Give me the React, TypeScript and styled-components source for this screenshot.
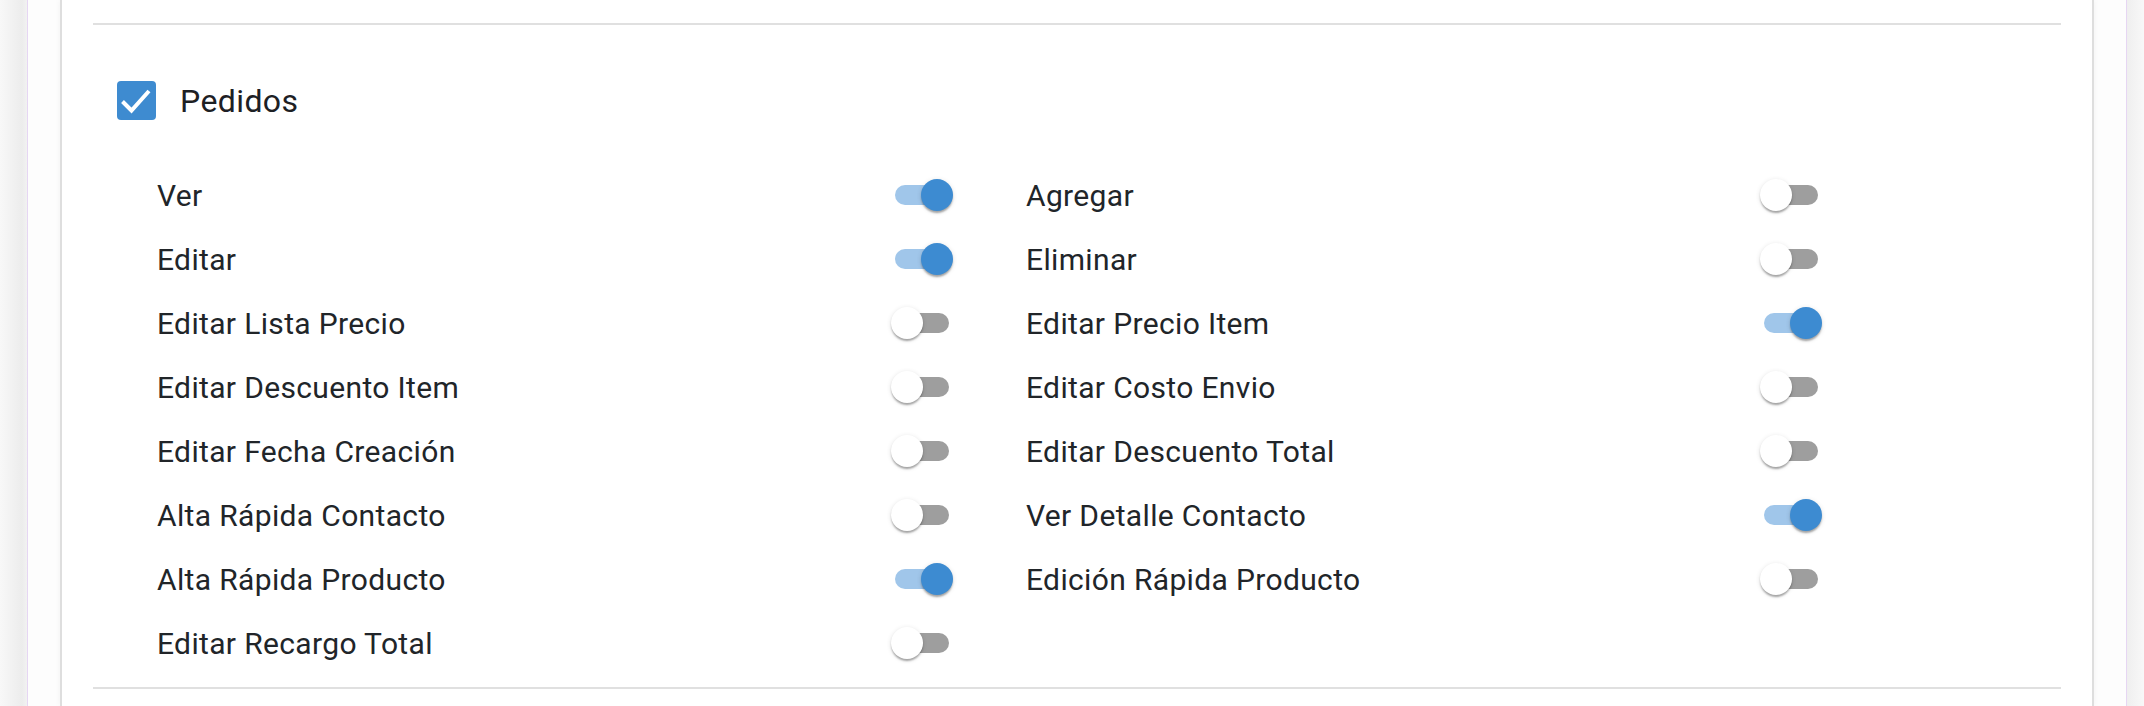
import { useState } from 'react'
import styled, { createGlobalStyle } from 'styled-components'

const GlobalStyle = createGlobalStyle`
  * {
    box-sizing: border-box;
  }
  body {
    margin: 0;
    font-family: Roboto, 'Liberation Sans', Arial, sans-serif;
    color: #212529;
    background: #f4f4f4;
  }
`

const Page = styled.div`
  height: 706px;
  overflow: hidden;
  padding: 0 17px 0 27px;
  background: linear-gradient(to right, #f8f8f8 0px, #ececec 22px, #f2f2f2 27px, #f2f2f2 2116px, #ececec 2122px, #f8f8f8 100%);
`

const Frame = styled.div`
  height: 100%;
  padding: 0 32px;
  background: #fdfdfd;
  border-left: 1px solid #e6d6f3;
  border-right: 1px solid #e6d6f3;
`

const Card = styled.div`
  height: 100%;
  padding: 23px 31px 0;
  background: #fff;
  border-left: 2px solid #dedede;
  border-right: 2px solid #dedede;
  box-shadow: 0 0 6px rgba(0, 0, 0, 0.05);
`

const Divider = styled.hr`
  margin: 0;
  border: 0;
  height: 2px;
  background: #e0e0e0;
`

const Section = styled.section`
  padding: 56px 0 12px;
`

const Header = styled.label`
  display: flex;
  align-items: center;
  gap: 24px;
  padding-left: 24px;
  height: 39px;
  cursor: pointer;
`

const CheckBox = styled.span<{ $checked: boolean }>`
  width: 39px;
  height: 39px;
  border-radius: 4px;
  display: flex;
  align-items: center;
  justify-content: center;
  background: ${(p) => (p.$checked ? '#3e8bd0' : '#fff')};
  border: ${(p) => (p.$checked ? 'none' : '3px solid #757575')};
`

const Title = styled.span`
  font-size: 32px;
  font-weight: 400;
  letter-spacing: 0.4px;
  color: #1d2024;
`

const Grid = styled.div`
  display: grid;
  grid-template-columns: 869px 869px;
  grid-auto-rows: 64px;
  margin-top: 43px;
  padding-left: 64px;
`

const Row = styled.div`
  display: flex;
  align-items: center;
  padding-right: 77px;
`

const Label = styled.span`
  flex: 1;
  font-size: 30px;
  letter-spacing: 0.35px;
`

const Track = styled.button<{ $on: boolean }>`
  position: relative;
  width: 54px;
  height: 20px;
  padding: 0;
  border: 0;
  border-radius: 10px;
  background: ${(p) => (p.$on ? '#a0c6ea' : '#9e9e9e')};
  cursor: pointer;
`

const Thumb = styled.span<{ $on: boolean }>`
  position: absolute;
  top: -6px;
  left: ${(p) => (p.$on ? '26px' : '-4px')};
  width: 32px;
  height: 32px;
  border-radius: 50%;
  background: ${(p) => (p.$on ? '#3d8bd1' : '#fff')};
  box-shadow: 0 3px 2px -1px rgba(0, 0, 0, 0.2), 0 2px 2px 0 rgba(0, 0, 0, 0.14), 0 1px 5px 0 rgba(0, 0, 0, 0.12);
  transition: left 0.15s;
`

type Permission = { label: string; on: boolean }

const initial: Permission[] = [
  { label: 'Ver', on: true },
  { label: 'Agregar', on: false },
  { label: 'Editar', on: true },
  { label: 'Eliminar', on: false },
  { label: 'Editar Lista Precio', on: false },
  { label: 'Editar Precio Item', on: true },
  { label: 'Editar Descuento Item', on: false },
  { label: 'Editar Costo Envio', on: false },
  { label: 'Editar Fecha Creación', on: false },
  { label: 'Editar Descuento Total', on: false },
  { label: 'Alta Rápida Contacto', on: false },
  { label: 'Ver Detalle Contacto', on: true },
  { label: 'Alta Rápida Producto', on: true },
  { label: 'Edición Rápida Producto', on: false },
  { label: 'Editar Recargo Total', on: false },
]

const Switch = ({ on, onToggle }: { on: boolean; onToggle: () => void }) => (
  <Track $on={on} onClick={onToggle} aria-pressed={on}>
    <Thumb $on={on} />
  </Track>
)

export default function App() {
  const [checked, setChecked] = useState(true)
  const [perms, setPerms] = useState(initial)

  const toggle = (i: number) =>
    setPerms((prev) => prev.map((p, idx) => (idx === i ? { ...p, on: !p.on } : p)))

  return (
    <>
      <GlobalStyle />
      <Page>
        <Frame>
          <Card>
            <Divider />
            <Section>
              <Header onClick={() => setChecked(!checked)}>
                <CheckBox $checked={checked}>
                  {checked && (
                    <svg width="39" height="39" viewBox="0 0 39 39">
                      <path d="M5.5 20.5l9 9L32 10" fill="none" stroke="#fff" strokeWidth="4" />
                    </svg>
                  )}
                </CheckBox>
                <Title>Pedidos</Title>
              </Header>
              <Grid>
                {perms.map((p, i) => (
                  <Row key={p.label}>
                    <Label>{p.label}</Label>
                    <Switch on={p.on} onToggle={() => toggle(i)} />
                  </Row>
                ))}
              </Grid>
            </Section>
            <Divider />
          </Card>
        </Frame>
      </Page>
    </>
  )
}
